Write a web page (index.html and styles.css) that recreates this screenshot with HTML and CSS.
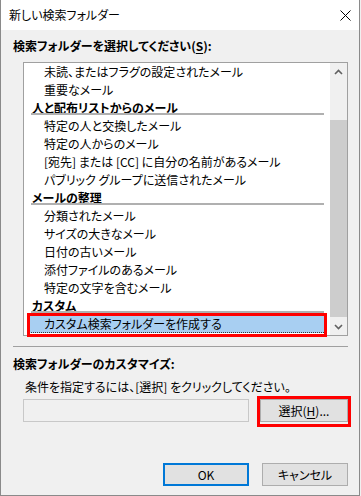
FILE: index.html
```html
<!DOCTYPE html>
<html lang="ja">
<head>
<meta charset="utf-8">
<link rel="stylesheet" href="styles.css">
</head>
<body>
<div class="window">
  <div class="titlebar">
    <span class="title">新しい検索フォルダー</span>
    <svg class="close" width="11" height="11" viewBox="0 0 11 11"><path d="M0.5 0.5 L10.5 10.5 M10.5 0.5 L0.5 10.5" stroke="#000" stroke-width="1" fill="none"/></svg>
  </div>
  <div class="content">
    <div class="label bold">検索フォルダーを選択してください(<u>S</u>):</div>
    <div class="listbox">
      <div class="items">
        <div class="item">未読、またはフラグの設定されたメール</div>
        <div class="item">重要なメール</div>
        <div class="group">人と配布リストからのメール</div>
        <div class="item">特定の人と交換したメール</div>
        <div class="item">特定の人からのメール</div>
        <div class="item">[宛先] または [CC] に自分の名前があるメール</div>
        <div class="item">パブリック グループに送信されたメール</div>
        <div class="group">メールの整理</div>
        <div class="item">分類されたメール</div>
        <div class="item">サイズの大きなメール</div>
        <div class="item">日付の古いメール</div>
        <div class="item">添付ファイルのあるメール</div>
        <div class="item">特定の文字を含むメール</div>
        <div class="group">カスタム</div>
        <div class="item selected"><span class="sel-fill">カスタム検索フォルダーを作成する</span><span class="mark mark-item"></span></div>
      </div>
      <div class="scrollbar">
        <div class="arrow"><svg width="9" height="6" viewBox="0 0 9 6"><path d="M1 5 L4.5 1.5 L8 5" stroke="#606060" stroke-width="1.6" fill="none"/></svg></div>
        <div class="track"><div class="thumb"></div></div>
        <div class="arrow"><svg width="9" height="6" viewBox="0 0 9 6"><path d="M1 1 L4.5 4.5 L8 1" stroke="#606060" stroke-width="1.6" fill="none"/></svg></div>
      </div>
    </div>
    <div class="sep"></div>
    <div class="label2 bold">検索フォルダーのカスタマイズ:</div>
    <div class="hint">条件を指定するには、[選択] をクリックしてください。</div>
    <div class="row">
      <div class="textbox"></div>
      <div class="btn-wrap">
        <div class="btn choose">選択(<u>H</u>)...</div>
        <span class="mark mark-btn"></span>
      </div>
    </div>
    <div class="footer">
      <div class="btn ok">OK</div>
      <div class="btn cancel">キャンセル</div>
    </div>
  </div>
</div>
</body>
</html>
```

FILE: styles.css
```css
* { box-sizing: border-box; }
html, body {
  margin: 0;
  padding: 0;
  background: #f0f0f0;
}
body {
  font-family: "Noto Sans CJK JP", "Noto Sans", sans-serif;
  font-size: 12px;
  color: #000;
  font-feature-settings: "palt";
}
.window {
  width: 360px;
  height: 496px;
  border: 1px solid #8a8a8a;
  border-top: none;
  background: #f0f0f0;
}
.titlebar {
  height: 30px;
  background: #fff;
  display: flex;
  align-items: center;
  justify-content: space-between;
  padding: 0 8px 0 8px;
}
.title {
  font-size: 12px;
  line-height: 16px;
}
.close {
  display: block;
  margin-right: 0;
}
.content {
  padding: 0 0 0 12px;
}
.bold { font-weight: bold; }
u { text-decoration: underline; text-underline-offset: 2px; }
.label {
  margin-top: 8px;
  line-height: 16px;
  height: 16px;
}
.listbox {
  margin-top: 8px;
  margin-left: 10px;
  width: 325px;
  height: 274px;
  border: 1px solid #a0a0a0;
  background: #fff;
  display: flex;
}
.items {
  flex: 1;
  padding-top: 0;
}
.item, .group {
  height: 18px;
  line-height: 18px;
  white-space: nowrap;
}
.item { padding-left: 20px; }
.group {
  padding-left: 8px;
  font-weight: bold;
  position: relative;
}
.group::after {
  content: "";
  position: absolute;
  left: 7px;
  right: 6px;
  bottom: 2px;
  height: 2px;
  background: #b0b0b0;
}
.item.selected {
  padding-left: 4px;
  padding-right: 4px;
  position: relative;
}
.sel-fill {
  display: block;
  height: 18px;
  line-height: 16px;
  padding-left: 15px;
  background: #a8cff2;
  border: 1px dotted #3a3a3a;
}
.mark {
  position: absolute;
  border: 3px solid #ff0000;
  pointer-events: none;
}
.mark-item {
  left: 3px;
  right: 3px;
  top: -2px;
  bottom: -4px;
}
.scrollbar {
  width: 17px;
  background: #f0f0f0;
  display: flex;
  flex-direction: column;
}
.arrow {
  height: 17px;
  display: flex;
  align-items: center;
  justify-content: center;
}
.track {
  flex: 1;
  padding: 40px 0 0 0;
}
.thumb {
  height: 197px;
  background: #cdcdcd;
}
.sep {
  margin-top: 10px;
  width: 335px;
  height: 1px;
  background: #a0a0a0;
}
.label2 {
  margin-top: 9px;
  line-height: 16px;
  height: 16px;
}
.hint {
  margin-top: 7px;
  padding-left: 12px;
  line-height: 16px;
  height: 16px;
}
.row {
  margin-top: 4px;
  display: flex;
  align-items: flex-start;
}
.textbox {
  margin-left: 10px;
  width: 226px;
  height: 23px;
  border: 1px solid #c8c8c8;
  background: #f0f0f0;
}
.btn-wrap {
  margin-left: 11px;
  position: relative;
}
.btn {
  height: 23px;
  background: #e1e1e1;
  border: 1px solid #adadad;
  display: flex;
  align-items: center;
  justify-content: center;
  line-height: 16px;
}
.choose { width: 88px; }
.mark-btn {
  left: -3px;
  right: -3px;
  top: -3px;
  bottom: -5px;
}
.footer {
  margin-top: 41px;
  width: 335px;
  display: flex;
  justify-content: flex-end;
  gap: 13px;
}
.ok {
  width: 86px;
  border: 2px solid #0078d7;
}
.cancel { width: 86px; }
```
